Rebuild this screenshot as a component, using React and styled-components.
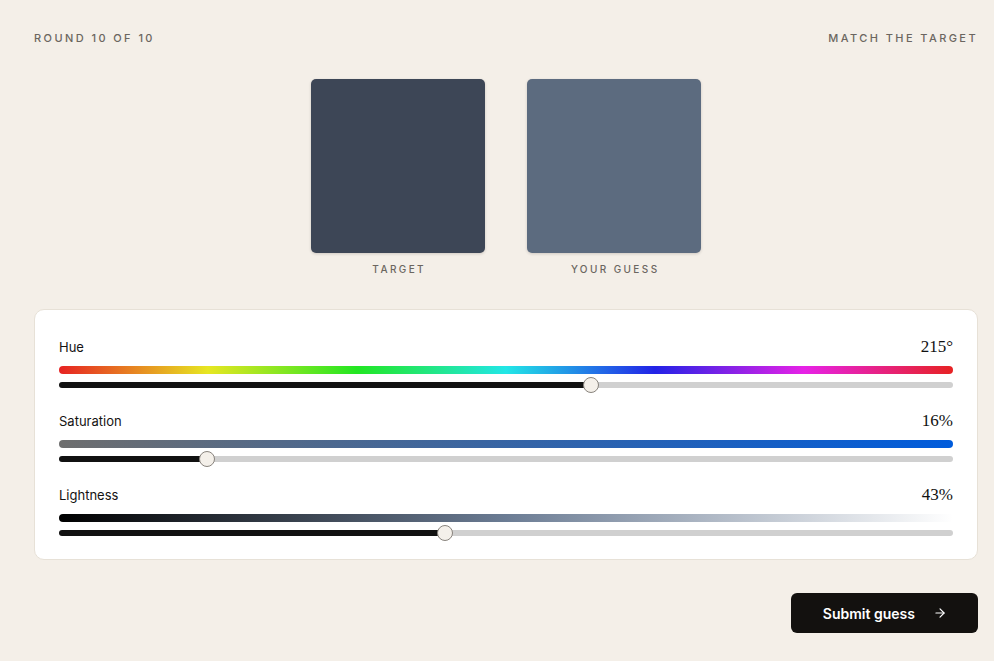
import { useState } from "react";
import styled, { createGlobalStyle } from "styled-components";

const GlobalStyle = createGlobalStyle`
  html, body {
    margin: 0;
    background: #f4efe8;
  }
  body {
    font-family: Inter, "Liberation Sans", sans-serif;
    color: #121110;
  }
`

const Page = styled.div`
  padding: 30px 16px 28px 34px;
  display: flex;
  flex-direction: column;
`

const Header = styled.div`
  display: flex;
  justify-content: space-between;
  align-items: center;
  height: 16px;
`

const Eyebrow = styled.div`
  font-size: 11px;
  line-height: 16px;
  letter-spacing: 0.22em;
  text-transform: uppercase;
  color: #6b6660;
  font-weight: 500;
`

const Swatches = styled.div`
  display: flex;
  justify-content: center;
  gap: 42px;
  margin-top: 33px;
`

const SwatchCol = styled.div`
  display: flex;
  flex-direction: column;
  align-items: center;
  gap: 9px;
`

const Swatch = styled.div`
  width: 174px;
  height: 174px;
  border-radius: 5px;
  background: ${p => p.$color};
  box-shadow: 0 1px 3px rgba(40, 30, 20, 0.18);
`

const SwatchLabel = styled.div`
  font-size: 10px;
  line-height: 14px;
  letter-spacing: 0.24em;
  text-transform: uppercase;
  color: #6b6660;
  font-weight: 500;
  margin-left: 0.24em;
`

const Card = styled.div`
  margin-top: 33px;
  background: #fff;
  border: 1px solid #e7e1d7;
  border-radius: 10px;
  padding: 26px 24px 23px;
  display: flex;
  flex-direction: column;
  gap: 22px;
`

const Control = styled.div`
  display: flex;
  flex-direction: column;
`

const ControlHead = styled.div`
  display: flex;
  justify-content: space-between;
  align-items: baseline;
  height: 22px;
  line-height: 22px;
`

const ControlLabel = styled.div`
  font-size: 13px;
  color: #141312;
`

const ControlValue = styled.div`
  font-family: "Liberation Serif", "Times New Roman", serif;
  font-size: 17px;
  color: #111;
`

const Spectrum = styled.div`
  margin-top: 8px;
  height: 8px;
  border-radius: 4px;
  background: ${p => p.$gradient};
`

const Range = styled.input`
  -webkit-appearance: none;
  appearance: none;
  display: block;
  width: 100%;
  height: 6px;
  margin: 8px 0 0;
  border-radius: 3px;
  outline: none;
  cursor: pointer;
  background: linear-gradient(to right, #111 var(--fill), #d0d0d0 var(--fill));

  &::-webkit-slider-thumb {
    -webkit-appearance: none;
    appearance: none;
    width: 16px;
    height: 16px;
    border-radius: 50%;
    background: #f4f0ea;
    border: 1px solid #88837d;
    box-sizing: border-box;
  }
`

const Footer = styled.div`
  display: flex;
  justify-content: flex-end;
  margin-top: 33px;
`

const SubmitButton = styled.button`
  display: flex;
  align-items: center;
  gap: 18px;
  height: 40px;
  padding: 0 31px 0 32px;
  border: none;
  border-radius: 6px;
  background: #13110f;
  color: #fff;
  font-family: Inter, "Liberation Sans", sans-serif;
  font-size: 14px;
  font-weight: 600;
  cursor: pointer;
`

const Arrow = () => (
  <svg width="14" height="14" viewBox="0 0 24 24" fill="none" stroke="currentColor" strokeWidth="2" strokeLinecap="round" strokeLinejoin="round">
    <path d="M5 12h14" />
    <path d="m12 5 7 7-7 7" />
  </svg>
);

const SliderControl = ({ label, value, display, max, gradient, onChange }) => {
  const pct = value / max;
  const fill = `${((8 + 878 * pct) / 894) * 100}%`;
  return (
    <Control>
      <ControlHead>
        <ControlLabel>{label}</ControlLabel>
        <ControlValue>{display}</ControlValue>
      </ControlHead>
      <Spectrum $gradient={gradient} />
      <Range
        type="range"
        min={0}
        max={max}
        value={value}
        onChange={e => onChange(Number(e.target.value))}
        style={{ "--fill": fill }}
      />
    </Control>
  );
};

const App = () => {
  const [h, setH] = useState(215);
  const [s, setS] = useState(16);
  const [l, setL] = useState(43);

  const hueStops = [0, 60, 120, 180, 240, 300, 360].map(d => `hsl(${d} 80% 52%)`).join(", ");

  return (<>
    <GlobalStyle />
    <Page>
      <Header>
        <Eyebrow>Round 10 of 10</Eyebrow>
        <Eyebrow>Match the target</Eyebrow>
      </Header>

      <Swatches>
        <SwatchCol>
          <Swatch $color="#3d4656" />
          <SwatchLabel>Target</SwatchLabel>
        </SwatchCol>
        <SwatchCol>
          <Swatch $color={`hsl(${h} ${s}% ${l}%)`} />
          <SwatchLabel>Your guess</SwatchLabel>
        </SwatchCol>
      </Swatches>

      <Card>
        <SliderControl
          label="Hue"
          value={h}
          max={360}
          display={`${h}°`}
          gradient={`linear-gradient(to right, ${hueStops})`}
          onChange={setH}
        />
        <SliderControl
          label="Saturation"
          value={s}
          max={100}
          display={`${s}%`}
          gradient={`linear-gradient(to right, hsl(${h} 0% ${l}%), hsl(${h} 100% ${l}%))`}
          onChange={setS}
        />
        <SliderControl
          label="Lightness"
          value={l}
          max={100}
          display={`${l}%`}
          gradient={`linear-gradient(to right, hsl(${h} ${s}% 0%), hsl(${h} ${s}% 50%), hsl(${h} ${s}% 100%))`}
          onChange={setL}
        />
      </Card>

      <Footer>
        <SubmitButton>
          Submit guess
          <Arrow />
        </SubmitButton>
      </Footer>
    </Page>
  </>);
}

export default App;
